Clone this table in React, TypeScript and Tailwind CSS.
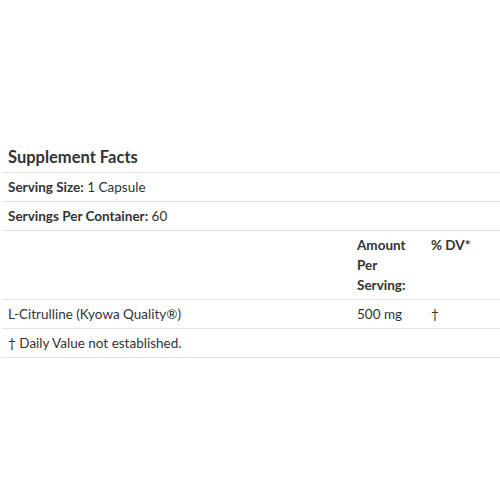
const rows = [
  { label: "Serving Size:", value: "1 Capsule" },
  { label: "Servings Per Container:", value: "60" },
];

export default function App() {
  return (
    <div
      className="w-[500px] h-[500px] bg-white text-[#333] pt-[145px] pl-[2px]"
      style={{ fontFamily: "Lato, 'Liberation Sans', sans-serif" }}
    >
      <div className="border-b border-[#e2e2e2] pl-[6px] pb-[4px] h-[28px] flex items-center">
        <h2 className="text-[16.5px] font-bold leading-[20px]">Supplement Facts</h2>
      </div>
      <table className="w-[498px] table-fixed border-collapse text-[13.5px] leading-[20px]">
        <colgroup>
          <col className="w-[349px]" />
          <col className="w-[74px]" />
          <col />
        </colgroup>
        <tbody>
          {rows.map((r) => (
            <tr key={r.label} className="border-b border-[#e2e2e2]">
              <td colSpan={3} className="pl-[6px] py-[4px]">
                <span className="font-bold">{r.label}</span> {r.value}
              </td>
            </tr>
          ))}
          <tr className="border-b border-[#e2e2e2] align-top">
            <td className="py-[4px]"></td>
            <td className="pl-[6px] pr-[4px] py-[4px] font-bold">Amount Per Serving:</td>
            <td className="pl-[6px] py-[4px] font-bold">% DV*</td>
          </tr>
          <tr className="border-b border-[#e2e2e2]">
            <td className="pl-[6px] py-[4px]">L-Citrulline (Kyowa Quality®)</td>
            <td className="pl-[6px] py-[4px]">500 mg</td>
            <td className="pl-[6px] py-[4px]">†</td>
          </tr>
          <tr className="border-b border-[#e2e2e2]">
            <td colSpan={3} className="pl-[6px] py-[4px]">
              † Daily Value not established.
            </td>
          </tr>
        </tbody>
      </table>
    </div>
  );
}
